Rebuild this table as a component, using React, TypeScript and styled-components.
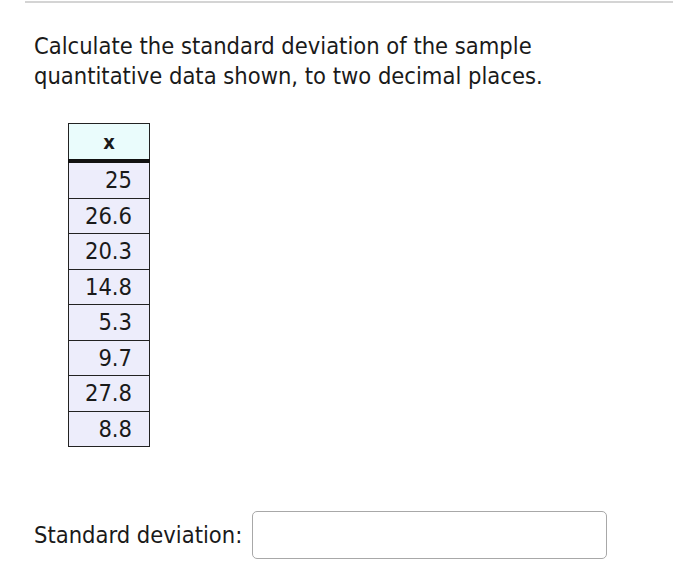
import React from "react";
import styled, { createGlobalStyle } from "styled-components";

const Global = createGlobalStyle`
  html, body { margin: 0; padding: 0; background: #ffffff; }
  body { font-family: "DejaVu Sans Condensed", "DejaVu Sans", sans-serif; color: #1a1a1a; }
`;

const Page = styled.div`
  width: 700px;
  height: 580px;
  box-sizing: border-box;
  padding: 1px 27px 0 25px;
  display: flex;
  flex-direction: column;
`;

const Rule = styled.hr`
  margin: 0;
  border: none;
  height: 2px;
  background: #d4d4d4;
`;

const Prompt = styled.p`
  margin: 28px 0 0 9px;
  font-size: 23.5px;
  line-height: 30px;
`;

const Table = styled.table`
  margin: 32px 0 0 43px;
  border-collapse: collapse;
  width: 82px;
  font-size: 23.5px;
`;

const HeadCell = styled.th`
  background: #eafcfc;
  border: 1.5px solid #222;
  border-bottom: 4px solid #111;
  height: 35px;
  padding: 0;
  font-weight: bold;
  font-size: 20px;
  text-align: center;
`;

const Cell = styled.td`
  background: #ededfb;
  border: 1.5px solid #222;
  height: 34.5px;
  padding: 0 17px 0 0;
  text-align: right;
`;

const AnswerRow = styled.div`
  margin-top: 64px;
  margin-left: 9px;
  display: flex;
  align-items: center;
  gap: 10px;
  font-size: 23.5px;
`;

const Input = styled.div`
  width: 355px;
  height: 48px;
  box-sizing: border-box;
  border: 1.5px solid #a8a8a8;
  border-radius: 5px;
  background: #fff;
`;

const values = ["25", "26.6", "20.3", "14.8", "5.3", "9.7", "27.8", "8.8"];

export default function App() {
  return (
    <>
      <Global />
      <Page>
        <Rule />
        <Prompt>
          Calculate the standard deviation of the sample
          <br />
          quantitative data shown, to two decimal places.
        </Prompt>
        <Table>
          <thead>
            <tr>
              <HeadCell>x</HeadCell>
            </tr>
          </thead>
          <tbody>
            {values.map((v, i) => (
              <tr key={i}>
                <Cell>{v}</Cell>
              </tr>
            ))}
          </tbody>
        </Table>
        <AnswerRow>
          <span>Standard deviation:</span>
          <Input />
        </AnswerRow>
      </Page>
    </>
  );
}
